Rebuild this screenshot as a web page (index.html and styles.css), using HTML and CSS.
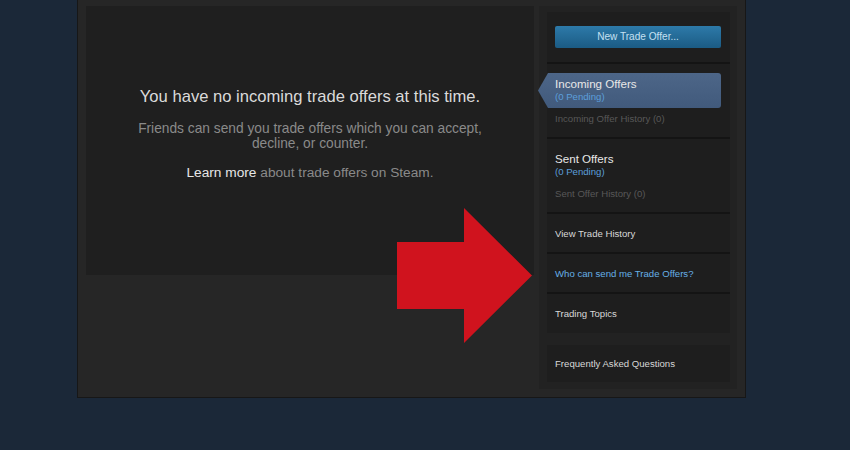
FILE: index.html
```html
<!DOCTYPE html>
<html>
<head>
<meta charset="utf-8">
<link rel="stylesheet" href="styles.css">
</head>
<body>
<div class="page">
  <div class="panel">
    <div class="main-box">
      <div class="empty-title">You have no incoming trade offers at this time.</div>
      <div class="empty-desc">Friends can send you trade offers which you can accept,<br>decline, or counter.</div>
      <div class="empty-more"><span class="learn">Learn more</span> about trade offers on Steam.</div>
    </div>
    <div class="sidebar">
      <div class="side-col">
        <div class="sec sec-btn"><div class="btn-new">New Trade Offer...</div></div>
        <div class="sec sec-offers sec-incoming">
          <div class="tab-active">
            <div class="off-title">Incoming Offers</div>
            <div class="off-pending">(0 Pending)</div>
          </div>
          <div class="off-history">Incoming Offer History (0)</div>
        </div>
        <div class="sec sec-offers sec-sent">
          <div class="off-title">Sent Offers</div>
          <div class="off-pending">(0 Pending)</div>
          <div class="off-history">Sent Offer History (0)</div>
        </div>
        <div class="sec sec-link"><span class="link-white">View Trade History</span></div>
        <div class="sec sec-link"><span class="link-blue">Who can send me Trade Offers?</span></div>
        <div class="sec sec-link sec-last"><span class="link-white">Trading Topics</span></div>
      </div>
      <div class="side-faq"><span class="link-white">Frequently Asked Questions</span></div>
    </div>
  </div>
  <svg class="red-arrow" width="135" height="135" viewBox="0 0 135 135"><polygon points="0,34 67,34 67,0 135,67.5 67,135 67,101 0,101" fill="#d0131e"/></svg>
</div>
</body>
</html>
```

FILE: styles.css
```css
html, body {
  margin: 0;
  padding: 0;
  background: #1b2838;
  font-family: "Liberation Sans", Arial, sans-serif;
}
.page {
  position: relative;
  width: 850px;
  height: 450px;
  overflow: hidden;
}
.panel {
  box-sizing: border-box;
  margin-left: 77px;
  width: 669px;
  height: 398px;
  background: #262626;
  border: 1px solid #171717;
  border-top: none;
  padding: 6px 8px 0 8px;
  display: flex;
  align-items: flex-start;
  gap: 5px;
}
.main-box {
  box-sizing: border-box;
  width: 448px;
  height: 269px;
  background: #1f1f1f;
  padding-top: 81px;
  text-align: center;
}
.empty-title {
  font-size: 16.6px;
  line-height: 20px;
  color: #dadada;
}
.empty-desc {
  margin-top: 14px;
  font-size: 13.75px;
  line-height: 15px;
  color: #8a8a8a;
}
.empty-more {
  margin-top: 13.5px;
  font-size: 13.7px;
  line-height: 15px;
  color: #8a8a8a;
}
.learn {
  color: #e6e6e6;
}
.sidebar {
  box-sizing: border-box;
  width: 198px;
  height: 383px;
  background: #222222;
  padding: 6px 7px 7px 8px;
  display: flex;
  flex-direction: column;
}
.side-col {
  background: #1e1e1e;
  display: flex;
  flex-direction: column;
}
.sec {
  padding-left: 8px;
  padding-right: 9px;
  border-bottom: 2px solid #141414;
}
.sec-last {
  border-bottom: none;
}
.sec-btn {
  padding-top: 14px;
  padding-bottom: 14px;
}
.btn-new {
  height: 22px;
  line-height: 22px;
  border-radius: 2px;
  background: linear-gradient(to bottom, #2d7aa9, #1b5b84);
  color: #c4e0f2;
  font-size: 10.1px;
  text-align: center;
}
.sec-incoming {
  padding-top: 9px;
  padding-bottom: 11px;
}
.tab-active {
  margin-left: -17px;
  padding: 4px 0 5px 17px;
  background: linear-gradient(to bottom, #4d6688, #415a7c);
  border-radius: 0 3px 3px 0;
  clip-path: polygon(10px 0, 100% 0, 100% 100%, 10px 100%, 0 50%);
}
.sec-sent {
  padding-top: 13px;
  padding-bottom: 11px;
}
.off-title {
  font-size: 11.6px;
  line-height: 14px;
  color: #e8e8e8;
}
.off-pending {
  font-size: 9.6px;
  line-height: 12px;
  color: #5c9fdb;
}
.off-history {
  margin-top: 9px;
  font-size: 9.6px;
  line-height: 14px;
  color: #585858;
}
.sec-incoming .off-history {
  margin-top: 4px;
}
.sec-link {
  padding-top: 13px;
  padding-bottom: 11px;
  font-size: 9.6px;
  line-height: 14px;
}
.sec-last {
  padding-bottom: 12px;
}
.link-white {
  color: #d8d8d8;
}
.link-blue {
  color: #66b0e6;
}
.side-faq {
  margin-top: 12px;
  background: #1e1e1e;
  padding: 12px 9px 11px 8px;
  font-size: 9.6px;
  line-height: 14px;
}
.red-arrow {
  position: absolute;
  left: 397px;
  top: 208px;
}
```
